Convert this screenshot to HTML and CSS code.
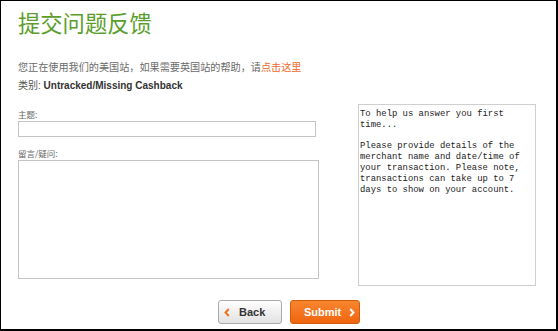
FILE: index.html
```html
<!DOCTYPE html>
<html lang="zh-CN">
<head>
  <meta charset="UTF-8">
  <meta name="viewport" content="width=device-width, initial-scale=1.0">
  <title>提交问题反馈</title>
  <link rel="stylesheet" href="styles.css">
</head>
<body>
  <div class="page">
    <h1>提交问题反馈</h1>
    <p class="notice">您正在使用我们的美国站，如果需要英国站的帮助，请<a href="#">点击这里</a></p>
    <p class="category">类别: <strong>Untracked/Missing Cashback</strong></p>

    <div class="form-area">
      <div class="fields">
        <label for="subject">主题:</label>
        <input type="text" id="subject" class="subject">
        <label for="message" class="second">留言/疑问:</label>
        <textarea id="message" class="message"></textarea>
      </div>
      <div class="help-box">To help us answer you first
time...

Please provide details of the
merchant name and date/time of
your transaction. Please note,
transactions can take up to 7
days to show on your account.</div>
    </div>

    <div class="actions">
      <button class="btn btn-back">
        <svg width="6" height="9" viewBox="0 0 6 9"><polyline points="4.8,1 1.5,4.5 4.8,8" fill="none" stroke="#ec7324" stroke-width="2"/></svg>
        Back
      </button>
      <button class="btn btn-submit">
        Submit
        <svg width="6" height="9" viewBox="0 0 6 9"><polyline points="1.2,1 4.5,4.5 1.2,8" fill="none" stroke="#fff" stroke-width="2"/></svg>
      </button>
    </div>
  </div>
</body>
</html>
```

FILE: styles.css
```css
body {
  margin: 0;
  font-family: "Liberation Sans", Arial, "Noto Sans CJK SC", sans-serif;
  background: #fff;
}
.page {
  width: 558px;
  height: 331px;
  box-sizing: border-box;
  border: 1px solid #000;
  border-right-width: 2px;
  border-bottom-width: 2px;
  padding: 6px 0 0 17px;
}
h1 {
  margin: 0;
  font-family: "Noto Sans CJK SC", sans-serif;
  font-size: 22.3px;
  font-weight: normal;
  line-height: 30px;
  color: #5b9e2c;
}
.notice {
  margin: 23px 0 0;
  font-family: "Noto Sans CJK SC", sans-serif;
  font-size: 10.15px;
  line-height: 14px;
  color: #6a6a6a;
}
.notice a {
  color: #f0682a;
  text-decoration: none;
}
.category {
  margin: 5px 0 0;
  font-size: 10px;
  line-height: 14px;
  color: #555;
}
.category strong {
  color: #333;
}
.form-area {
  display: flex;
  margin-top: 11px;
  height: 182px;
}
.fields {
  display: flex;
  flex-direction: column;
  width: 301px;
  padding-top: 4px;
}
.fields label {
  font-family: "Noto Sans CJK SC", sans-serif;
  font-size: 8.5px;
  line-height: 12px;
  color: #666;
}
.fields .second {
  margin-top: 10px;
}
.subject {
  width: 298px;
  height: 16px;
  box-sizing: border-box;
  margin: 1px 0 0;
  padding: 0 3px;
  border: 1px solid #c4c4c4;
  outline: none;
}
.message {
  width: 301px;
  height: 119px;
  box-sizing: border-box;
  margin: 1px 0 0;
  padding: 2px;
  border: 1px solid #c4c4c4;
  resize: none;
  outline: none;
}
.help-box {
  width: 178px;
  height: 182px;
  box-sizing: border-box;
  margin-left: 39px;
  padding: 4px 1px;
  border: 1px solid #cfcfcf;
  font-family: "Liberation Mono", "Courier New", monospace;
  font-size: 8.9px;
  line-height: 10.8px;
  color: #222;
  white-space: pre;
}
.actions {
  display: flex;
  justify-content: center;
  gap: 8px;
  margin-top: 14px;
  padding-left: 4px;
}
.btn {
  display: flex;
  align-items: center;
  height: 24px;
  box-sizing: border-box;
  border-radius: 3px;
  font-family: "Liberation Sans", Arial, sans-serif;
  font-size: 11px;
  font-weight: bold;
  cursor: pointer;
}
.btn-back {
  width: 64px;
  padding: 0 0 0 5px;
  gap: 9px;
  border: 1px solid #a9a9a9;
  background: linear-gradient(#fefefe, #e2e2e2);
  color: #333;
}
.btn-submit {
  width: 70px;
  padding: 0 0 0 13px;
  gap: 8px;
  border: 1px solid #d45a0c;
  background: linear-gradient(#f8862f, #f0650f);
  color: #fff;
}
```
